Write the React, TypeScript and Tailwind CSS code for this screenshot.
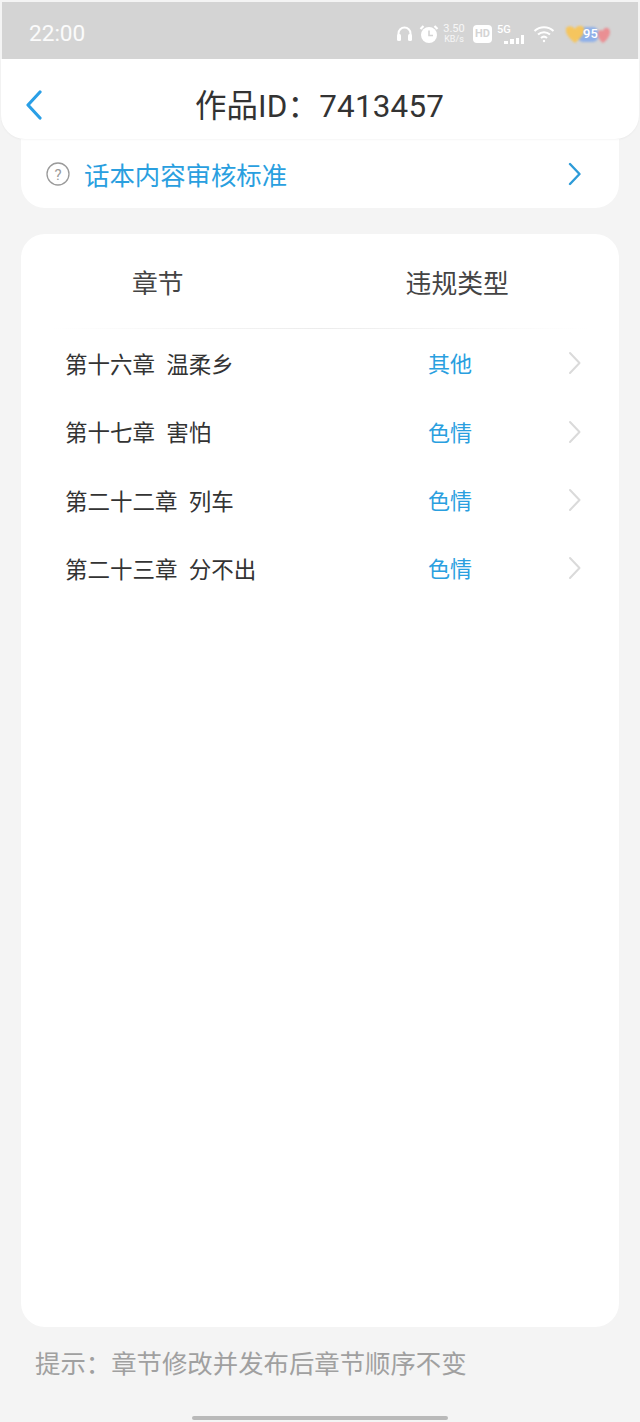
const FONT = "font-['Roboto','Noto_Sans_CJK_SC',sans-serif]";

const rows = [
  ["第十六章  温柔乡", "其他"],
  ["第十七章  害怕", "色情"],
  ["第二十二章  列车", "色情"],
  ["第二十三章  分不出", "色情"],
];

function StatusIcons() {
  return (
    <div className="flex items-center text-white">
      <svg width="17" height="18" viewBox="0 0 17 18" fill="none" stroke="white" strokeWidth="2">
        <path d="M2.5 13V8.5a6 6 0 0 1 12 0V13" />
        <rect x="1" y="9" width="4" height="7" rx="1.5" fill="white" stroke="none" />
        <rect x="12" y="9" width="4" height="7" rx="1.5" fill="white" stroke="none" />
      </svg>
      <svg className="ml-[6px]" width="20" height="20" viewBox="0 0 20 20">
        <circle cx="10" cy="11" r="8" fill="white" />
        <path d="M1.5 5l3-3M18.5 5l-3-3" stroke="white" strokeWidth="2.2" />
        <path d="M10 6.5v5h4" stroke="#d4d4d4" strokeWidth="1.6" fill="none" />
      </svg>
      <div className="ml-[4px] w-[22px] text-[11px] leading-[10px] text-center text-white/80">
        <div>3.50</div>
        <div className="text-[9px]">KB/s</div>
      </div>
      <div className="ml-[8px] w-[19px] h-[18px] bg-white rounded-[4px] text-[#d4d4d4] text-[11px] leading-[18px] font-bold text-center">HD</div>
      <div className="ml-[5px] w-[27px] h-[20px] flex flex-col justify-between">
        <div className="text-[11px] leading-[11px] font-medium">5G</div>
        <div className="flex items-end justify-end gap-[2px] h-[9px]">
          <div className="w-[4px] h-[3px] bg-white" />
          <div className="w-[4px] h-[5px] bg-white" />
          <div className="w-[3px] h-[6px] bg-white" />
          <div className="w-[3px] h-[9px] bg-white" />
        </div>
      </div>
      <svg className="ml-[9px]" width="22" height="18" viewBox="0 0 22 18" fill="none" stroke="white" strokeWidth="2">
        <path d="M1.5 6a14 14 0 0 1 19 0" />
        <path d="M5 9.5a9 9 0 0 1 12 0" />
        <path d="M8 13a4.5 4.5 0 0 1 6 0" />
        <circle cx="11" cy="16" r="1.2" fill="white" stroke="none" />
      </svg>
      <div className="relative ml-[11px] w-[44px] h-[20px]">
        <svg width="44" height="20" viewBox="0 0 44 20" className="blur-[1px]">
          <rect x="12" y="3" width="20" height="15" rx="5" fill="#8fb0e8" />
          <path d="M0 4c3-3 7-2 9 1 2-4 7-4 9-1 2 5-4 11-9 15C5 16-2 9 0 4z" fill="#f5c55e" />
          <path d="M32 10c0-4 3-5 5-3 1-5 7-4 7 1 0 4-4 9-7 11-3-2-5-5-5-9z" fill="#ea8f93" />
        </svg>
        <span className="absolute left-[17px] top-[2px] text-[13px] leading-[16px] font-medium text-white">95</span>
      </div>
    </div>
  );
}

function Chevron({ color, w = 2.4 }: { color: string; w?: number }) {
  return (
    <svg width="14" height="24" viewBox="0 0 14 24" fill="none" stroke={color} strokeWidth={w} strokeLinecap="round" strokeLinejoin="round">
      <path d="M3 2l9.5 10L3 22" />
    </svg>
  );
}

export default function App() {
  return (
    <div className={`${FONT} w-[640px] h-[1422px] bg-[#f4f4f4] flex flex-col overflow-hidden`}>
      <div className="mx-[2px] mt-[2px] h-[57px] shrink-0 bg-[#d4d4d4] pl-[27px] pr-[28px] pt-[7px] flex items-center justify-between">
        <span className="text-[22.6px] text-white/90">22:00</span>
        <StatusIcons />
      </div>
      <div className="relative z-10 mx-[1px] h-[80px] shrink-0 bg-white rounded-b-[24px] flex items-center justify-center shadow-[0_1px_2px_rgba(0,0,0,0.04)]">
        <div className="absolute left-[24px] top-[31px]">
          <svg width="18" height="30" viewBox="0 0 18 30" fill="none" stroke="#2a9fe6" strokeWidth="3.2" strokeLinecap="round" strokeLinejoin="round">
            <path d="M15 2L3 15l12 13" />
          </svg>
        </div>
        <span className="text-[31.4px] text-[#333333] leading-none tracking-[0.2px] pt-[16px] -ml-[1px]">作品ID：7413457</span>
      </div>
      <div className="mx-[21px] h-[69px] shrink-0 bg-white rounded-b-[24px] pl-[25px] pr-[38px] flex items-center">
        <svg width="24" height="24" viewBox="0 0 24 24" fill="none">
          <circle cx="12" cy="12" r="11" stroke="#9a9a9a" strokeWidth="1.3" />
          <text x="12" y="17.5" textAnchor="middle" fontSize="15" fill="#9a9a9a" fontFamily="Roboto">?</text>
        </svg>
        <span className="ml-[14px] mt-[6px] text-[25.4px] leading-none text-[#2a9fdf]">话本内容审核标准</span>
        <div className="ml-auto">
          <Chevron color="#2d9bd8" />
        </div>
      </div>
      <div className="mx-[21px] mt-[26px] h-[1093px] shrink-0 bg-white rounded-[24px] flex flex-col">
        <div className="h-[95px] shrink-0 relative flex items-center">
          <span className="ml-[111px] mt-[7px] text-[25.8px] leading-none text-[#444444]">章节</span>
          <span className="ml-[222px] mt-[7px] text-[25.8px] leading-none text-[#444444]">违规类型</span>
          <div className="absolute left-[30px] right-[30px] bottom-0 h-[1px] bg-gradient-to-r from-white via-[#ececec] to-white" />
        </div>
        <div className="flex flex-col">
          {rows.map(([name, type]) => (
            <div key={name} className="h-[68.4px] pl-[44px] pr-[38px] flex items-center">
              <span className="w-[363px] mt-[4px] text-[22.5px] leading-none text-[#333333] whitespace-pre">{name}</span>
              <span className="mt-[4px] text-[22px] leading-none text-[#2a9fdf]">{type}</span>
              <div className="ml-auto">
                <Chevron color="#dadada" w={2} />
              </div>
            </div>
          ))}
        </div>
      </div>
      <div className="pl-[35px] mt-[21px] text-[25.4px] leading-[32px] text-[#a0a0a0]">提示：章节修改并发布后章节顺序不变</div>
      <div className="mt-auto mb-[2px] mx-auto w-[256px] h-[4px] rounded-full bg-[#b9b9b9]" />
    </div>
  );
}
